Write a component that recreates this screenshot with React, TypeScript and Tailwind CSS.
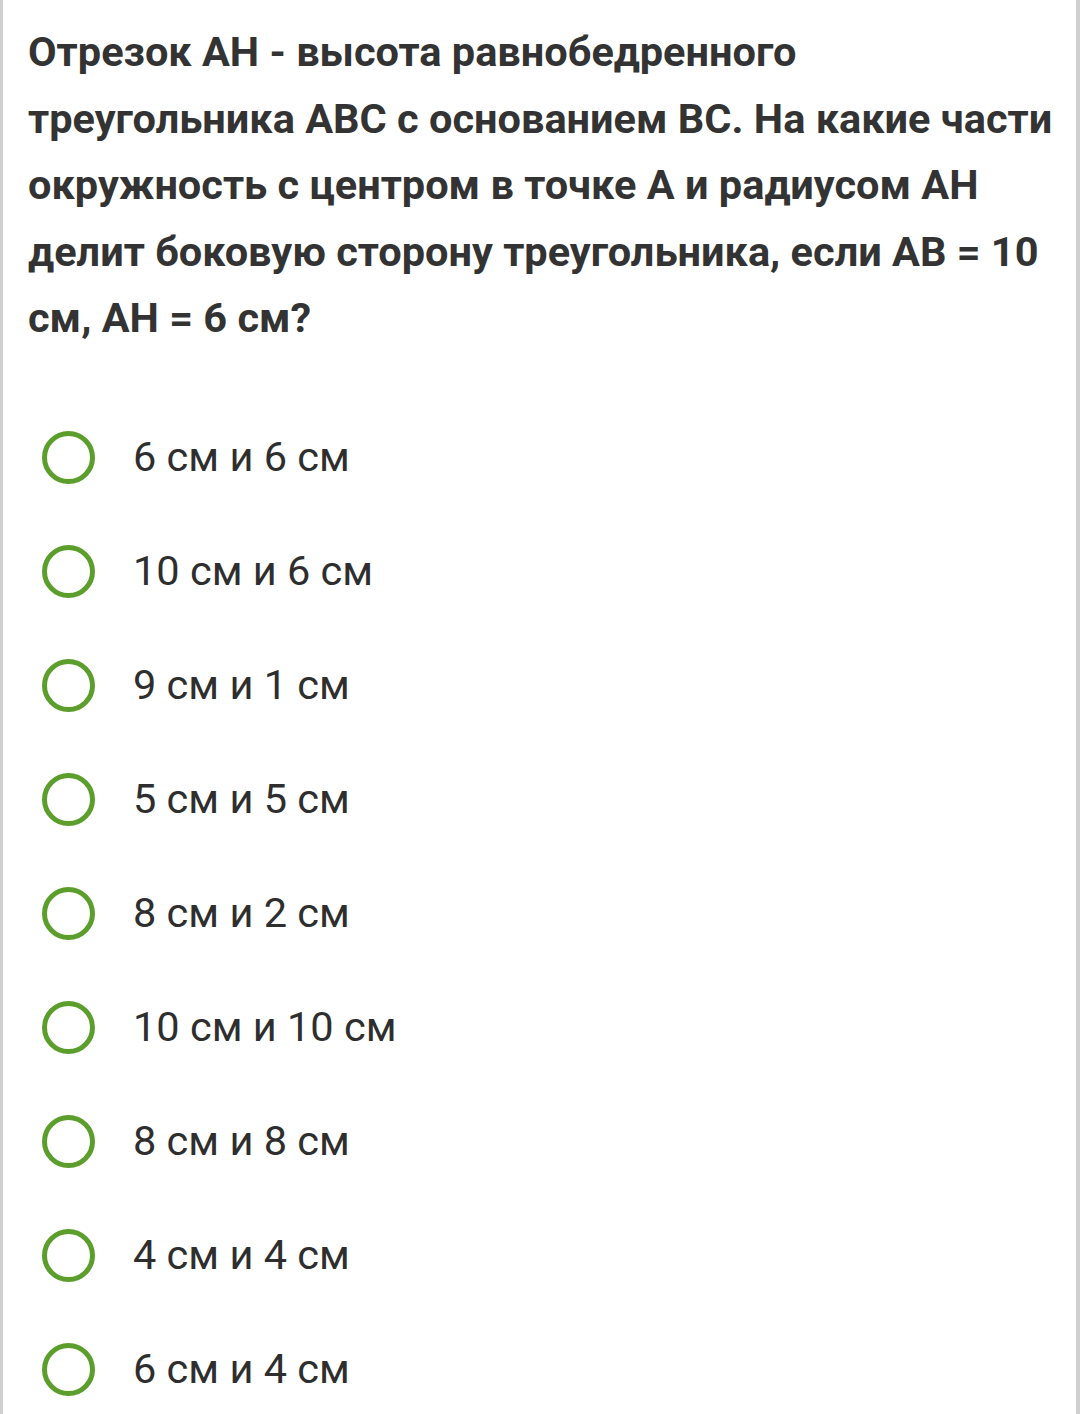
import React from 'react';

const options = [
  '6 см и 6 см',
  '10 см и 6 см',
  '9 см и 1 см',
  '5 см и 5 см',
  '8 см и 2 см',
  '10 см и 10 см',
  '8 см и 8 см',
  '4 см и 4 см',
  '6 см и 4 см',
];

const Radio: React.FC = () => (
  <span className="block w-[53px] h-[53px] rounded-full border-[5px] border-[#5c9e2c] shrink-0" />
);

export default function App() {
  return (
    <div
      className="w-[1080px] h-[1414px] overflow-hidden bg-white flex border-l-[3px] border-r-[4px] border-[#d0d0d0]"
      style={{ fontFamily: 'Roboto, "Noto Sans", sans-serif' }}
    >
      <div className="flex-1 flex flex-col">
        <div className="h-[4px] mx-[9px] bg-[#eeeeee]" />
        <h1 className="mt-[19px] pl-[25px] pr-[8px] text-[41.5px] leading-[66.5px] font-bold text-[#333333]">
          Отрезок АН - высота равнобедренного треугольника АВС с основанием ВС. На какие части окружность с центром в точке А и радиусом АН делит боковую сторону треугольника, если АВ = 10 см, АН = 6 см?
        </h1>
        <ul className="mt-[49px] flex flex-col">
          {options.map((o) => (
            <li key={o} className="h-[114px] flex items-center pl-[39px] gap-[38px]">
              <Radio />
              <span className="text-[41.5px] text-[#2e2e2e]">{o}</span>
            </li>
          ))}
        </ul>
      </div>
    </div>
  );
}
